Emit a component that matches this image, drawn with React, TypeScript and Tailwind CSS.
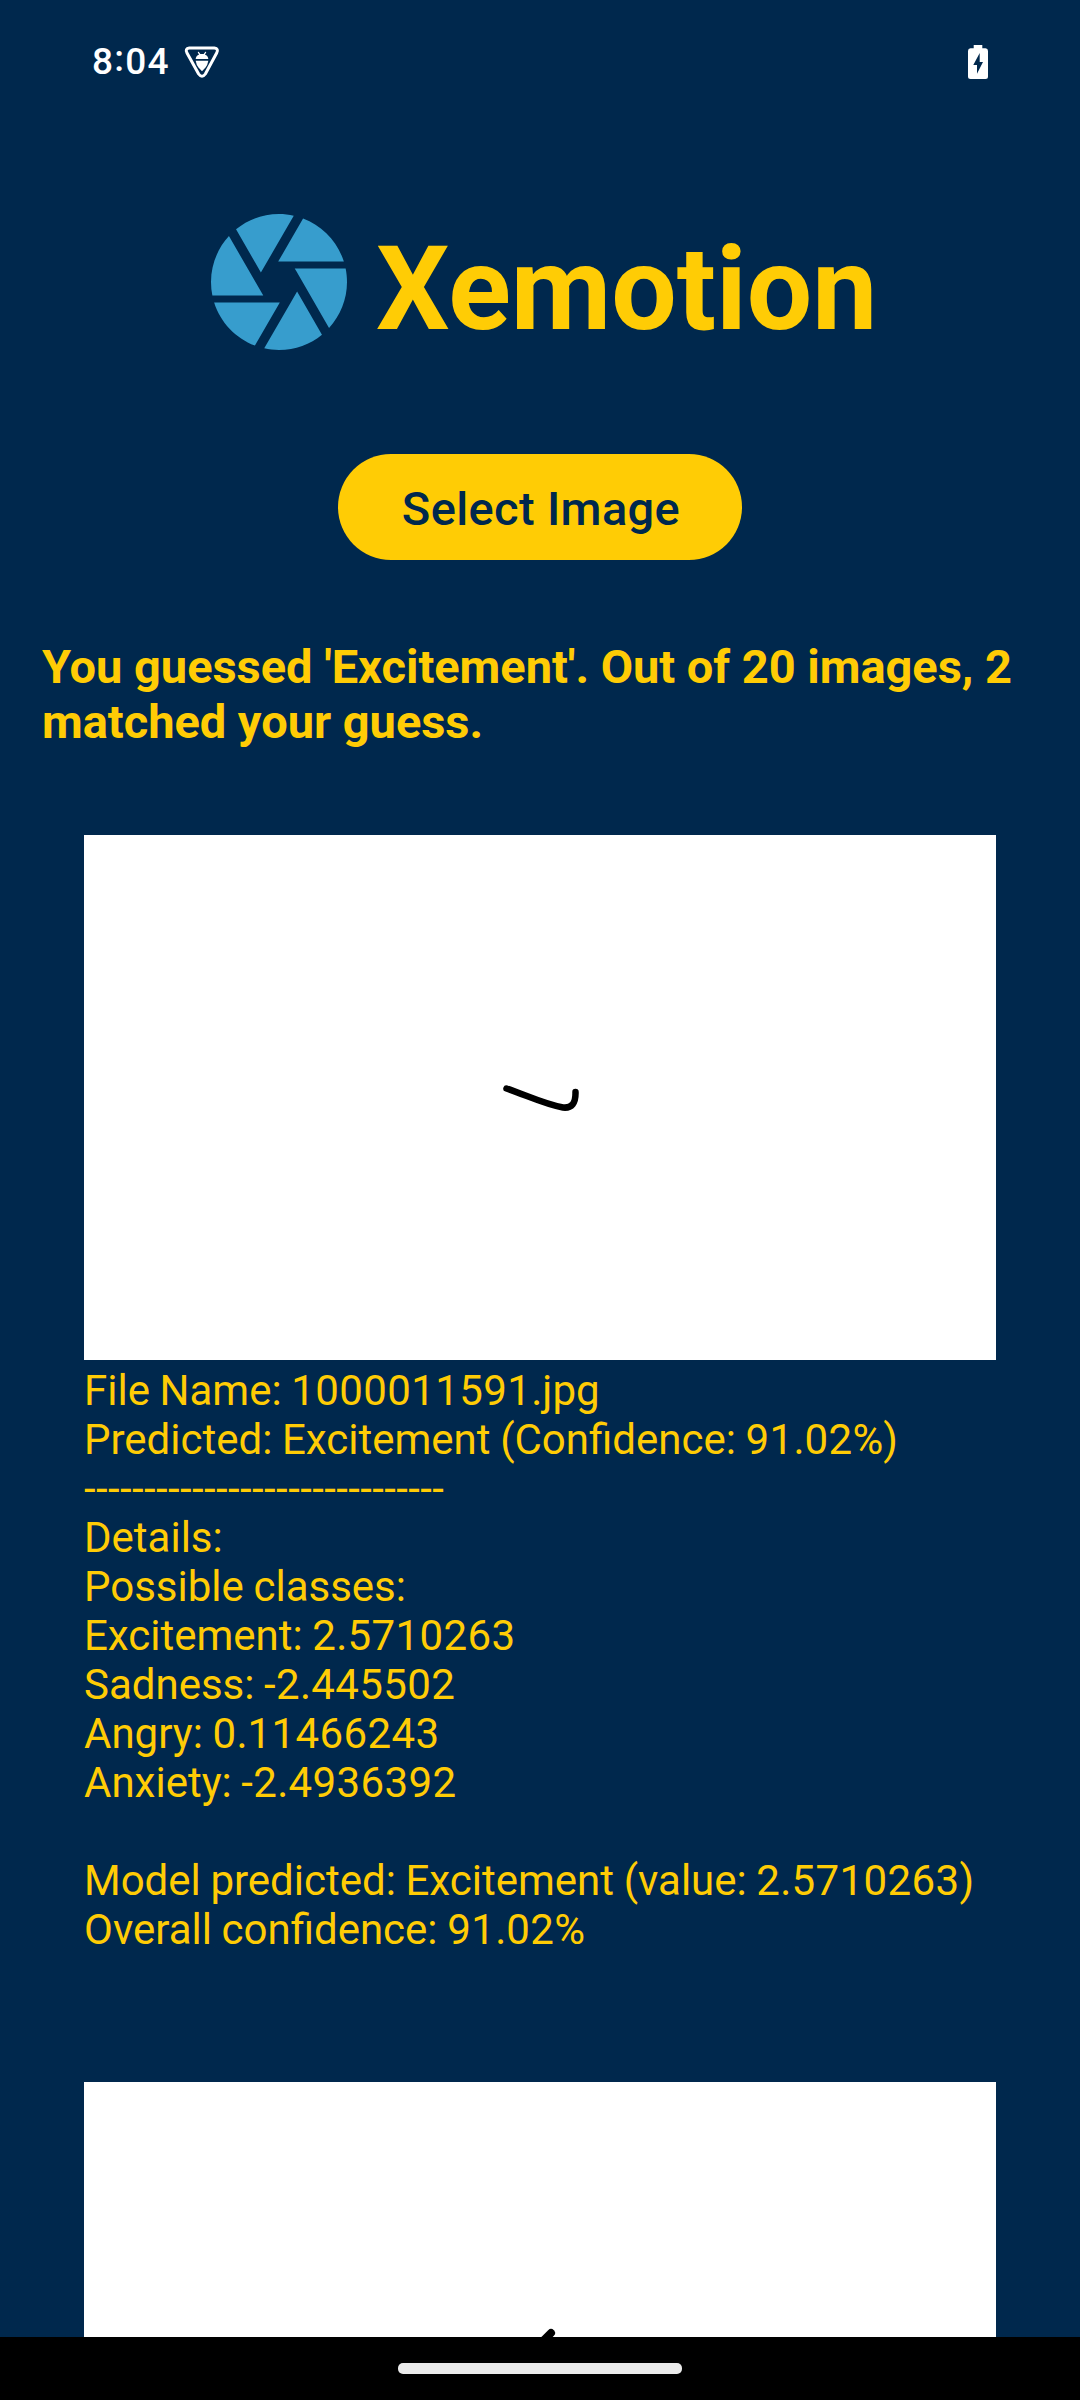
const details = [
  "File Name: 1000011591.jpg",
  "Predicted: Excitement (Confidence: 91.02%)",
  "------------------------------",
  "Details:",
  "Possible classes:",
  "Excitement: 2.5710263",
  "Sadness: -2.445502",
  "Angry: 0.11466243",
  "Anxiety: -2.4936392",
  "",
  "Model predicted: Excitement (value: 2.5710263)",
  "Overall confidence: 91.02%",
];

function DetailLine({ text }: { text: string }) {
  return (
    <p className="h-[49px] whitespace-nowrap [word-spacing:-0.8px]">
      {text.split(/([\d-]+)/).map((part, i) => (
        <span key={i} className={i % 2 ? "tracking-[0.4px]" : ""}>
          {part}
        </span>
      ))}
    </p>
  );
}

function DebugShieldIcon() {
  return (
    <svg viewBox="306 48 114 102" className="ml-[13px] h-[34px] w-[38px]">
      <path
        d="M325 57H400Q414 59 407 72L373 135Q363 149 353 135L318 72Q311 59 325 57Z"
        fill="none"
        stroke="white"
        strokeWidth="9"
        strokeLinejoin="round"
      />
      <path d="M344 90Q345 79 354 77L350 69L353 68L358 75H368L373 68L376 69L372 77Q381 79 382 90Z" fill="white" />
      <path d="M344 95H382Q380 108 373 116L363 127L353 116Q346 108 344 95Z" fill="white" />
    </svg>
  );
}

function BatteryIcon() {
  return (
    <svg viewBox="0 0 20 34" className="h-[34px] w-[20px]">
      <path
        fillRule="evenodd"
        fill="white"
        d="M5.7 0H14.3V3.3H17.5Q20 3.5 20 6V31.5Q20 34 17.5 34H2.5Q0 34 0 31.5V6Q0 3.5 2.5 3.3H5.7ZM11.7 8L5.3 20H9V28.7L15 17H11.7Z"
      />
    </svg>
  );
}

function ApertureIcon() {
  return (
    <svg viewBox="2 2 20 20" className="mt-[1.5px] size-[136px] shrink-0 fill-[#379dcd]">
      <path d="M9.4 10.5l4.77-8.26C13.47 2.09 12.75 2 12 2c-2.4 0-4.6.85-6.32 2.25l3.66 6.35.06-.1zM21.54 9c-.92-2.92-3.15-5.26-6-6.34L11.88 9h9.66zm.26 1h-7.49l.29.5 4.76 8.25C21 16.97 22 14.61 22 12c0-.69-.07-1.35-.2-2zM8.54 12l-3.9-6.75C3.01 7.03 2 9.39 2 12c0 .69.07 1.35.2 2h7.49l-1.15-2zm-6.08 3c.92 2.92 3.15 5.26 6 6.34L12.12 15H2.46zm11.27 0l-3.9 6.76c.7.15 1.42.24 2.17.24 2.4 0 4.6-.85 6.32-2.25l-3.66-6.35-.93 1.6z" />
    </svg>
  );
}

export default function App() {
  return (
    <div className="flex h-[2400px] w-[1080px] flex-col overflow-hidden bg-[#00284d] font-['Roboto',sans-serif] text-[#ffcc05]">
      <header className="flex h-[124px] shrink-0 items-center justify-between px-[92px] text-white">
        <div className="flex items-center">
          <span className="text-[37px] leading-[44px] font-medium tracking-[1.2px]">
            8<span className="relative -top-[3px]">:</span>04
          </span>
          <DebugShieldIcon />
        </div>
        <BatteryIcon />
      </header>

      <div className="mt-[88px] flex h-[140px] shrink-0 pl-[211px]">
        <ApertureIcon />
        <h1 className="ml-[29px] pt-[7px] text-[116px] leading-[140px] font-bold">Xemotion</h1>
      </div>

      <button className="mx-auto mt-[102px] h-[106px] w-[404px] shrink-0 rounded-full bg-[#ffcc05] pt-[4px] pl-[2px] text-[47px] font-medium tracking-[0.35px] text-[#00284d]">
        Select Image
      </button>

      <p className="mx-[42px] mt-[79px] text-[47px] leading-[55px] font-bold tracking-[-0.03px]">
        You guessed 'Excitement'. Out of 20 images, 2 matched your guess.
      </p>

      <div className="mx-[84px] mt-[86px] h-[525px] shrink-0 bg-white">
        <svg viewBox="0 0 912 525" className="size-full">
          <path
            d="M422.5 253.5C442 260 460 269 479 272.500Q492 274 491.5 257"
            fill="none"
            stroke="black"
            strokeWidth="6.5"
            strokeLinecap="round"
          />
        </svg>
      </div>

      <div className="mx-[84px] mt-[6px] text-[42px] leading-[49px]">
        {details.map((line, i) => (
          <DetailLine key={i} text={line} />
        ))}
      </div>

      <div className="mx-[84px] mt-[128px] h-[255px] shrink-0 bg-white">
        <svg viewBox="0 0 912 255" className="size-full">
          <path d="M467 251L456 262" fill="none" stroke="black" strokeWidth="8" strokeLinecap="round" />
        </svg>
      </div>

      <footer className="flex h-[63px] shrink-0 justify-center bg-black pt-[26px]">
        <div className="h-[11px] w-[284px] rounded-[5px] bg-[#ebebeb]" />
      </footer>
    </div>
  );
}
